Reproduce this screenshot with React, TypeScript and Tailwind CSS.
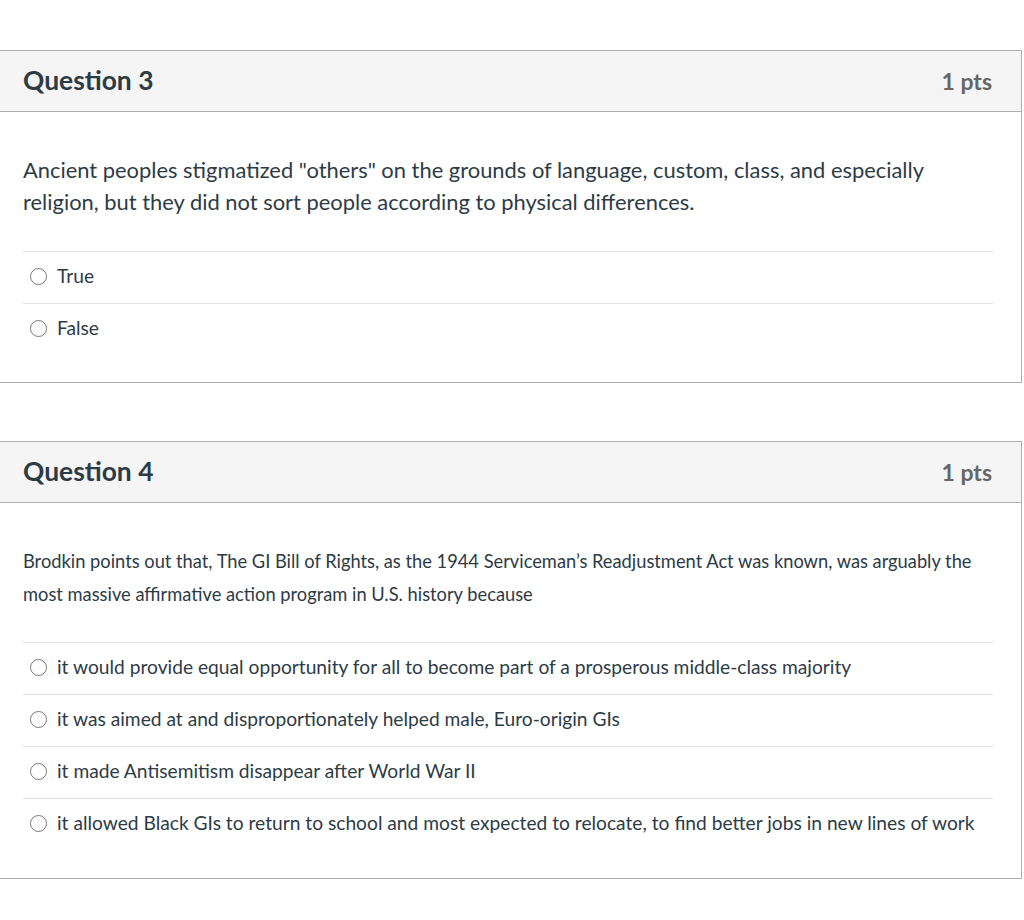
import React from "react";

const font = { fontFamily: "Lato, 'Noto Sans', sans-serif" };

function Radio() {
  return (
    <span className="inline-block w-[17px] h-[17px] rounded-full border border-[#767676] bg-white shrink-0" />
  );
}

function Card({
  title,
  pts,
  question,
  small,
  answers,
}: {
  title: string;
  pts: string;
  question: React.ReactNode;
  small?: boolean;
  answers: string[];
}) {
  return (
    <div className="w-[1023px] border-y border-r border-[#aeaeae] bg-white">
      <div className="h-[61px] flex items-center justify-between pl-6 pr-[29px] bg-[#f5f5f5] border-b border-[#aeaeae]">
        <span className="text-[26.4px] font-bold text-[#2d3b45]">{title}</span>
        <span className="text-[23px] font-bold text-[#666666]">{pts}</span>
      </div>
      <div className={small ? "pl-6 pr-[28px] pt-[42px] pb-[28px]" : "pl-6 pr-[28px] pt-[42px] pb-[27px]"}>
        <div
          className={
            small
              ? "text-[18.3px] leading-[33px] text-[#2d3b45] pb-[31px]"
              : "text-[21.9px] leading-[32px] text-[#2d3b45] pb-[33px]"
          }
        >
          {question}
        </div>
        <div>
          {answers.map((a) => (
            <div
              key={a}
              className="h-[52px] border-t border-[#e0e0e0] flex items-center gap-[10px] pl-[7px] pb-[2px] text-[19.2px] text-[#2d3b45]"
            >
              <Radio />
              <span>{a}</span>
            </div>
          ))}
        </div>
      </div>
    </div>
  );
}

export default function App() {
  return (
    <div className="w-[1025px] min-h-[920px] bg-white pt-[50px] ml-[-1px]" style={font}>
      <Card
        title="Question 3"
        pts="1 pts"
        question={
          <>
            Ancient peoples stigmatized "others" on the grounds of language, custom, class, and especially
            religion, but they did not sort people according to physical differences.
          </>
        }
        answers={["True", "False"]}
      />
      <div className="h-[58px]" />
      <Card
        title="Question 4"
        pts="1 pts"
        small
        question={
          <>
            Brodkin points out that, The GI Bill of Rights, as the 1944 Serviceman’s Readjustment Act was known, was arguably the
            most massive affirmative action program in U.S. history because
          </>
        }
        answers={[
          "it would provide equal opportunity for all to become part of a prosperous middle-class majority",
          "it was aimed at and disproportionately helped male, Euro-origin GIs",
          "it made Antisemitism disappear after World War II",
          "it allowed Black GIs to return to school and most expected to relocate, to find better jobs in new lines of work",
        ]}
      />
    </div>
  );
}
